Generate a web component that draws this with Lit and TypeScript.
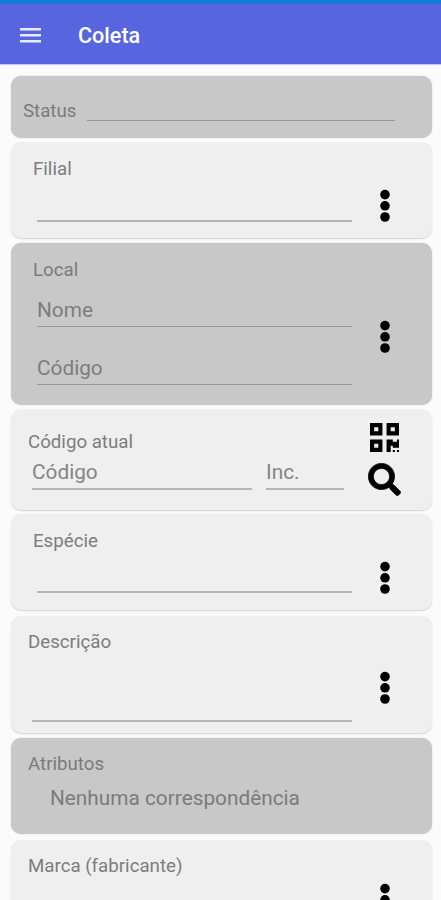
import { LitElement, html, css, svg } from "lit";
import { customElement, property } from "lit/decorators.js";

@customElement("more-button")
class MoreButton extends LitElement {
  static styles = css`
    :host { display: block; width: 12px; height: 34px; }
    svg { display: block; }
  `;
  render() {
    return html`<svg width="12" height="34" viewBox="0 0 12 34" aria-label="Mais">
      ${[5.6, 16.8, 28].map((y) => svg`<circle cx="6" cy=${y} r="4.8" />`)}
    </svg>`;
  }
}

@customElement("line-field")
class LineField extends LitElement {
  @property() placeholder = "";
  static styles = css`
    :host {
      display: block;
      box-sizing: border-box;
      height: 30px;
      border-bottom: var(--line-width, 2px) solid var(--line, #b5b5b5);
      font-size: 20.8px;
      line-height: 26px;
      color: var(--hint, #868686);
      white-space: nowrap;
    }
  `;
  render() {
    return html`${this.placeholder}`;
  }
}

@customElement("app-root")
class AppRoot extends LitElement {
  static styles = css`
    :host {
      display: block;
      height: 900px;
      overflow: hidden;
      background: #fbfbfb;
      font-family: Roboto, "Liberation Sans", sans-serif;
      color: #7d7d7d;
    }
    .statusbar { height: 4px; background: #167bd6; }
    .appbar {
      display: flex;
      align-items: center;
      box-sizing: border-box;
      height: 60px;
      padding: 2px 20px 0;
      gap: 37px;
      background: #5766de;
      box-shadow: 0 1px 1px #c3c8f6;
      color: #fff;
    }
    .menu { display: block; margin-top: -1px; }
    .title { margin: 1px 0 0; font-size: 21.6px; line-height: 26px; font-weight: 500; }
    .list {
      display: flex;
      flex-direction: column;
      gap: 4px;
      padding: 12px 9px 0 11px;
    }
    .card {
      display: flex;
      flex: none;
      box-sizing: border-box;
      border-radius: 10px;
      background: #efefef;
      box-shadow: 0 1px 1.5px rgba(0, 0, 0, 0.16);
      --hint: #858585;
      --line: #b5b5b5;
    }
    .locked {
      background: #c8c8c8;
      color: #7b7b7b;
      --hint: #7d7d7d;
      --line: #9a9a9a;
      --line-width: 1px;
      box-shadow: 0 0 1.5px rgba(0, 0, 0, 0.22);
    }
    .main { display: flex; flex-direction: column; width: 324px; }
    .label { font-size: 18.7px; line-height: 22px; white-space: nowrap; }
    .actions { display: flex; flex-direction: column; align-items: center; width: 66px; }

    .status { height: 62px; padding: 23px 37px 0 12px; gap: 11px; }
    .status .label { margin: 1px 0 0; }
    .status line-field { flex: 1; height: 22px; }

    .single { height: 96px; padding: 16px 0 0 22px; }
    .single .main { width: 319px; }
    .single line-field { margin: 12px 0 0 4px; width: 315px; margin-top: 12px; }
    .single .actions { padding-top: 31px; }

    .local { height: 162px; margin-top: 1px; padding: 16px 0 0 22px; }
    .local .main { width: 319px; }
    .local .fields { display: flex; flex-direction: column; gap: 28px; margin: 16px 0 0 4px; width: 315px; }
    .local .actions { padding-top: 61px; }

    .codigo { height: 101px; padding: 22px 0 0 17px; }
    .codigo .fields { display: flex; gap: 14px; margin: 6px 0 0 4px; }
    .codigo line-field { height: 31px; line-height: 27px; }
    .codigo .wide { width: 220px; }
    .codigo .short { width: 78px; }
    .codigo .actions { margin-top: -8px; gap: 11px; width: 65px; }
    .codigo svg { flex: none; display: block; }

    .single.especie line-field { margin-top: 11px; }
    .descricao { height: 117px; margin-top: 2px; padding: 15px 0 0 17px; }
    .descricao line-field { margin: 39px 0 0 4px; width: 320px; }
    .descricao .actions { padding-top: 40px; }

    .atributos { height: 96px; margin-top: 1px; padding: 15px 0 0 17px; }
    .empty { margin: 10px 0 0 22px; font-size: 20.8px; line-height: 26px; white-space: nowrap; }

    .marca { height: 97px; margin-top: 2px; padding: 15px 0 0 17px; }
    .marca .actions { padding-top: 28px; }
  `;

  render() {
    return html`
      <div class="statusbar"></div>
      <header class="appbar">
        <svg class="menu" width="21" height="16" viewBox="0 0 21 16" aria-label="Menu">
          <path d="M0 2.2h21M0 8.2h21M0 14.2h21" stroke="#e9ecff" stroke-width="2.4" />
        </svg>
        <h1 class="title">Coleta</h1>
      </header>
      <main class="list">
        <section class="card locked status">
          <div class="label">Status</div>
          <line-field></line-field>
        </section>

        <section class="card single">
          <div class="main">
            <div class="label">Filial</div>
            <line-field></line-field>
          </div>
          <div class="actions"><more-button></more-button></div>
        </section>

        <section class="card locked local">
          <div class="main">
            <div class="label">Local</div>
            <div class="fields">
              <line-field placeholder="Nome"></line-field>
              <line-field placeholder="Código"></line-field>
            </div>
          </div>
          <div class="actions"><more-button></more-button></div>
        </section>

        <section class="card codigo">
          <div class="main">
            <div class="label">Código atual</div>
            <div class="fields">
              <line-field class="wide" placeholder="Código"></line-field>
              <line-field class="short" placeholder="Inc."></line-field>
            </div>
          </div>
          <div class="actions">
            <svg width="29" height="29" viewBox="0 32 448 448" aria-label="QR">
              <path d="M0 224h192V32H0v192zM64 96h64v64H64V96zm192-64v192h192V32H256zm128 128h-64V96h64v64zM0 480h192V288H0v192zm64-128h64v64H64v-64zm352-64h32v128h-96v-32h-32v96h-64V288h96v32h64v-32zm0 160h32v32h-32v-32zm-64 0h32v32h-32v-32z" />
            </svg>
            <svg width="33" height="33" viewBox="-6 -6 524 524" aria-label="Buscar">
              <path stroke="#000" stroke-width="12" d="M505 442.7L405.3 343c-4.5-4.5-10.6-7-17-7H372c27.6-35.3 44-79.7 44-128C416 93.1 322.9 0 208 0S0 93.1 0 208s93.1 208 208 208c48.3 0 92.7-16.4 128-44v16.3c0 6.4 2.5 12.5 7 17l99.7 99.7c9.4 9.4 24.6 9.4 33.9 0l28.3-28.3c9.4-9.4 9.4-24.6.1-34zM208 336c-70.7 0-128-57.2-128-128 0-70.7 57.2-128 128-128 70.7 0 128 57.2 128 128 0 70.7-57.2 128-128 128z" />
            </svg>
          </div>
        </section>

        <section class="card single especie">
          <div class="main">
            <div class="label">Espécie</div>
            <line-field></line-field>
          </div>
          <div class="actions"><more-button></more-button></div>
        </section>

        <section class="card descricao">
          <div class="main">
            <div class="label">Descrição</div>
            <line-field></line-field>
          </div>
          <div class="actions"><more-button></more-button></div>
        </section>

        <section class="card locked atributos">
          <div class="main">
            <div class="label">Atributos</div>
            <div class="empty">Nenhuma correspondência</div>
          </div>
        </section>

        <section class="card marca">
          <div class="main">
            <div class="label">Marca (fabricante)</div>
          </div>
          <div class="actions"><more-button></more-button></div>
        </section>
      </main>
    `;
  }
}
